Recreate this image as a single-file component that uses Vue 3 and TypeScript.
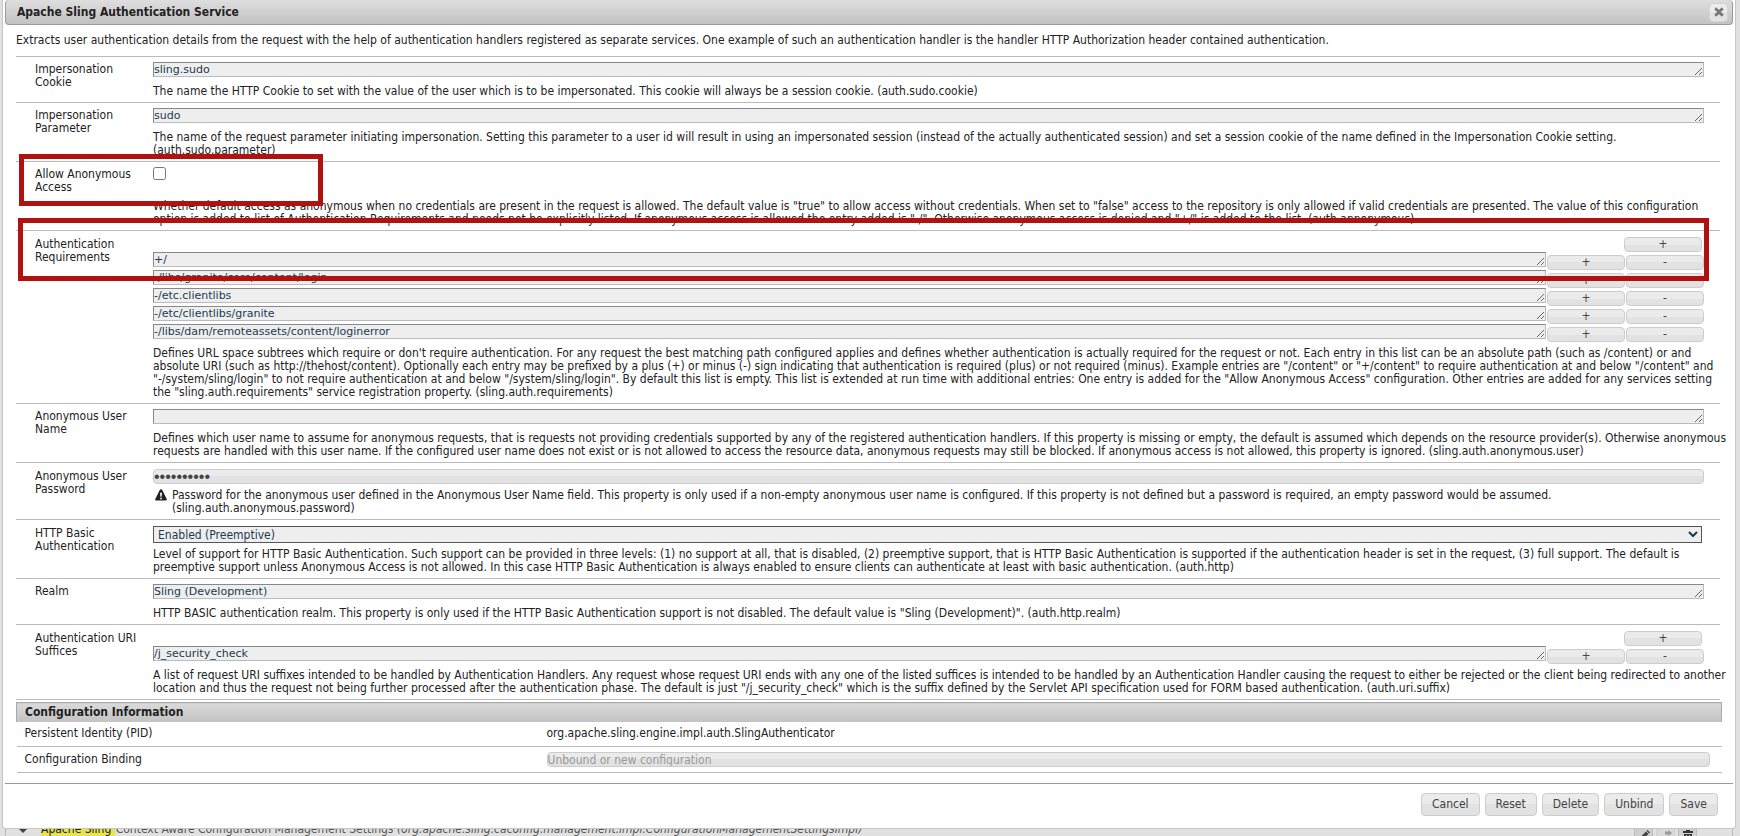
<script setup lang="ts">
import { reactive } from 'vue'

type Kind = 'text' | 'check' | 'list' | 'password' | 'select'

interface Field {
  id: string
  label: string
  kind: Kind
  values: string[]
  description: string
  marked?: boolean
}

const fields = reactive<Field[]>([
  {
    id: 'auth.sudo.cookie',
    label: 'Impersonation Cookie',
    kind: 'text',
    values: ['sling.sudo'],
    description:
      'The name the HTTP Cookie to set with the value of the user which is to be impersonated. This cookie will always be a session cookie. (auth.sudo.cookie)',
  },
  {
    id: 'auth.sudo.parameter',
    label: 'Impersonation Parameter',
    kind: 'text',
    values: ['sudo'],
    description:
      'The name of the request parameter initiating impersonation. Setting this parameter to a user id will result in using an impersonated session (instead of the actually authenticated session) and set a session cookie of the name defined in the Impersonation Cookie setting. (auth.sudo.parameter)',
  },
  {
    id: 'auth.annonymous',
    label: 'Allow Anonymous Access',
    kind: 'check',
    values: [],
    marked: true,
    description:
      'Whether default access as anonymous when no credentials are present in the request is allowed. The default value is "true" to allow access without credentials. When set to "false" access to the repository is only allowed if valid credentials are presented. The value of this configuration option is added to list of Authentication Requirements and needs not be explicitly listed. If anonymous access is allowed the entry added is "-/". Otherwise anonymous access is denied and "+/" is added to the list. (auth.annonymous)',
  },
  {
    id: 'sling.auth.requirements',
    label: 'Authentication Requirements',
    kind: 'list',
    values: [
      '+/',
      '-/libs/granite/core/content/login',
      '-/etc.clientlibs',
      '-/etc/clientlibs/granite',
      '-/libs/dam/remoteassets/content/loginerror',
    ],
    marked: true,
    description:
      'Defines URL space subtrees which require or don\'t require authentication. For any request the best matching path configured applies and defines whether authentication is actually required for the request or not. Each entry in this list can be an absolute path (such as /content) or and absolute URI (such as http://thehost/content). Optionally each entry may be prefixed by a plus (+) or minus (-) sign indicating that authentication is required (plus) or not required (minus). Example entries are "/content" or "+/content" to require authentication at and below "/content" and "-/system/sling/login" to not require authentication at and below "/system/sling/login". By default this list is empty. This list is extended at run time with additional entries: One entry is added for the "Allow Anonymous Access" configuration. Other entries are added for any services setting the "sling.auth.requirements" service registration property. (sling.auth.requirements)',
  },
  {
    id: 'sling.auth.anonymous.user',
    label: 'Anonymous User Name',
    kind: 'text',
    values: [''],
    description:
      'Defines which user name to assume for anonymous requests, that is requests not providing credentials supported by any of the registered authentication handlers. If this property is missing or empty, the default is assumed which depends on the resource provider(s). Otherwise anonymous requests are handled with this user name. If the configured user name does not exist or is not allowed to access the resource data, anonymous requests may still be blocked. If anonymous access is not allowed, this property is ignored. (sling.auth.anonymous.user)',
  },
  {
    id: 'sling.auth.anonymous.password',
    label: 'Anonymous User Password',
    kind: 'password',
    values: ['unmodified'],
    description:
      'Password for the anonymous user defined in the Anonymous User Name field. This property is only used if a non-empty anonymous user name is configured. If this property is not defined but a password is required, an empty password would be assumed. (sling.auth.anonymous.password)',
  },
  {
    id: 'auth.http',
    label: 'HTTP Basic Authentication',
    kind: 'select',
    values: ['Enabled (Preemptive)'],
    description:
      'Level of support for HTTP Basic Authentication. Such support can be provided in three levels: (1) no support at all, that is disabled, (2) preemptive support, that is HTTP Basic Authentication is supported if the authentication header is set in the request, (3) full support. The default is preemptive support unless Anonymous Access is not allowed. In this case HTTP Basic Authentication is always enabled to ensure clients can authenticate at least with basic authentication. (auth.http)',
  },
  {
    id: 'auth.http.realm',
    label: 'Realm',
    kind: 'text',
    values: ['Sling (Development)'],
    description:
      'HTTP BASIC authentication realm. This property is only used if the HTTP Basic Authentication support is not disabled. The default value is "Sling (Development)". (auth.http.realm)',
  },
  {
    id: 'auth.uri.suffix',
    label: 'Authentication URI Suffices',
    kind: 'list',
    values: ['/j_security_check'],
    description:
      'A list of request URI suffixes intended to be handled by Authentication Handlers. Any request whose request URI ends with any one of the listed suffices is intended to be handled by an Authentication Handler causing the request to either be rejected or the client being redirected to another location and thus the request not being further processed after the authentication phase. The default is just "/j_security_check" which is the suffix defined by the Servlet API specification used for FORM based authentication. (auth.uri.suffix)',
  },
])

const modes = ['Disabled', 'Enabled', 'Enabled (Preemptive)']
const actions = ['Cancel', 'Reset', 'Delete', 'Unbind', 'Save']

function insert(field: Field, index: number): void {
  field.values.splice(index, 0, '')
}

function remove(field: Field, index: number): void {
  field.values.splice(index, 1)
}
</script>

<template>
  <div class="page">
    <section class="dialog" role="dialog" aria-labelledby="dialog-title">
      <header class="titlebar">
        <h1 id="dialog-title">Apache Sling Authentication Service</h1>
        <button type="button" class="close" aria-label="Close">
          <svg viewBox="0 0 10 10" width="10" height="10">
            <path d="M1.2 1.4 5 4.7 8.8 1.4M1.2 8.6 5 5.3 8.8 8.6M3 5H7" fill="none" stroke="#777" stroke-width="2.8" />
          </svg>
        </button>
      </header>

      <form class="content" @submit.prevent>
        <p class="intro">
          Extracts user authentication details from the request with the help of authentication handlers registered as
          separate services. One example of such an authentication handler is the handler HTTP Authorization header
          contained authentication.
        </p>

        <div v-for="field in fields" :key="field.id" class="row" :class="field.kind">
          <label class="name" :for="field.id">{{ field.label }}</label>
          <div class="value">
            <textarea
              v-if="field.kind === 'text'"
              :id="field.id"
              v-model="field.values[0]"
              class="area"
              rows="1"
            ></textarea>
            <input v-else-if="field.kind === 'check'" :id="field.id" type="checkbox" class="tick" />
            <input
              v-else-if="field.kind === 'password'"
              :id="field.id"
              v-model="field.values[0]"
              type="password"
              class="box"
              autocomplete="off"
            />
            <select v-else-if="field.kind === 'select'" :id="field.id" v-model="field.values[0]" class="choice">
              <option v-for="mode in modes" :key="mode">{{ mode }}</option>
            </select>
            <div v-else class="entries">
              <button type="button" class="small first" aria-label="Add entry" @click="insert(field, 0)">+</button>
              <div v-for="(_, i) in field.values" :key="i" class="entry">
                <textarea
                  :id="i === 0 ? field.id : undefined"
                  v-model="field.values[i]"
                  class="area"
                  rows="1"
                  :aria-label="field.label + ' ' + (i + 1)"
                ></textarea>
                <button type="button" class="small" aria-label="Add after" @click="insert(field, i + 1)">+</button>
                <button type="button" class="small" aria-label="Remove" @click="remove(field, i)">-</button>
              </div>
            </div>

            <div class="note">
              <svg v-if="field.kind === 'password'" class="alert" viewBox="0 0 12 12" width="12" height="12">
                <path d="M6 0.2Q6.9 0.2 7.4 1.3L11.7 10Q12.2 11.6 11 11.6H1Q-0.2 11.6 0.3 10L4.6 1.3Q5.1 0.2 6 0.2Z" fill="#222" />
                <path d="M5 3.8H7L6.6 7.8H5.4ZM5.2 8.7H6.8V10.2H5.2Z" fill="#fff" />
              </svg>
              <p>{{ field.description }}</p>
            </div>
          </div>
          <div v-if="field.marked" class="marker"></div>
        </div>

        <table class="info">
          <thead>
            <tr>
              <th colspan="2">Configuration Information</th>
            </tr>
          </thead>
          <tbody>
            <tr>
              <td>Persistent Identity (PID)</td>
              <td>org.apache.sling.engine.impl.auth.SlingAuthenticator</td>
            </tr>
            <tr class="binding">
              <td><label for="binding">Configuration Binding</label></td>
              <td><input id="binding" class="box" type="text" value="Unbound or new configuration" disabled /></td>
            </tr>
          </tbody>
        </table>
      </form>

      <footer class="actions">
        <button v-for="action in actions" :key="action" type="button">{{ action }}</button>
      </footer>
    </section>

    <div class="behind">
      <svg class="arrow" viewBox="0 0 8 8" width="8" height="8"><path d="M0 1H8V3L4 7 0 3Z" fill="#444" /></svg>
      <span class="title"><mark>Apache Sling </mark>Context Aware Configuration Management Settings <em>(org.apache.sling.caconfig.management.impl.ConfigurationManagementSettingsImpl)</em></span>
      <span class="tools">
        <button type="button" aria-label="Edit">
          <svg viewBox="0 0 12 12" width="12" height="12"><path d="M1 11 2 7.5 8 1.5 10.5 4 4.5 10ZM8.6 1 9.6 0 12 2.4 11 3.4Z" fill="#444" /></svg>
        </button>
        <button type="button" aria-label="Unbind" disabled>
          <svg viewBox="0 0 12 12" width="12" height="12"><path d="M5 1.5H8.5V0L12 3 8.5 6V4.5H5ZM7 7.5H3.5V6L0 9 3.5 12V10.5H7Z" fill="#333" /></svg>
        </button>
        <button type="button" aria-label="Delete">
          <svg viewBox="0 0 12 12" width="12" height="12"><path d="M1 1H4V0H8V1H11V3H1ZM2 4H10V12H2Z" fill="#333" /><path d="M4.5 5V11M7.5 5V11" stroke="#ccc" stroke-width="1" /></svg>
        </button>
      </span>
    </div>
  </div>
</template>

<style>
body {
  margin: 0;
  background: #e1e1e1;
}
</style>

<style scoped>
.page {
  height: 100vh;
  overflow: hidden;
  color: #222;
  font: 12px/13px 'DejaVu Sans Condensed', 'DejaVu Sans', Verdana, sans-serif;
}

.page * {
  box-sizing: border-box;
}

button,
input,
select,
textarea {
  margin: 0;
  padding: 0;
  font: inherit;
}

h1,
p {
  margin: 0;
  font-size: 12px;
}

.dialog {
  position: relative;
  z-index: 1;
  margin: 0 4px 0 2px;
  padding: 0 2px;
  border: 1px solid #c6c6c6;
  border-top: 0;
  border-radius: 0 0 4px 4px;
  background: #fff;
}

.titlebar {
  display: flex;
  align-items: center;
  justify-content: space-between;
  height: 25px;
  padding: 0 4px 0 11px;
  border: 1px solid #999;
  border-top: 0;
  border-radius: 4px;
  background: linear-gradient(#dedede, #c2c2c2);
}

.close {
  display: flex;
  align-items: center;
  justify-content: center;
  width: 19px;
  height: 19px;
  border: 1px solid #d3d3d3;
  border-radius: 4px;
  background: linear-gradient(#ececec 50%, #e2e2e2 50%);
}

.content {
  padding: 8px 11px 10px;
}

.intro {
  padding: 0 0 9px;
  line-height: 14px;
}

.row {
  position: relative;
  display: grid;
  grid-template-columns: 118px 1fr;
  margin-right: 2px;
  padding: 5px 0 4px 19px;
  border-top: 1px solid #bbb;
}

.row:last-of-type {
  border-bottom: 1px solid #bbb;
}

.name {
  padding: 1px 12px 0 0;
}

.value {
  display: flex;
  flex-direction: column;
}

.area {
  display: block;
  width: 100%;
  height: 15px;
  border: 1px solid;
  border-color: #888 #bbb #bbb #888;
  overflow: hidden;
  background: #eee;
  color: #1a3c50;
  font: 11px/14px 'DejaVu Sans', Verdana, sans-serif;
}

.value > .area,
.value > .box {
  width: auto;
  margin-right: 16px;
}

.note {
  display: flex;
  margin-right: -8px;
  padding-top: 8px;
}

.tick {
  width: 13px;
  height: 13px;
}

.check .note {
  margin-right: 0;
  padding-top: 20px;
}

.list,
.password,
.select {
  padding-top: 6px;
}

.list .note,
.password .note,
.select .note {
  padding-top: 5px;
}

.first {
  align-self: flex-end;
  margin-right: 2px;
}

.entries {
  display: flex;
  flex-direction: column;
  margin-right: 16px;
}

.entry {
  display: flex;
  gap: 1px;
  height: 18px;
}

.entry .area {
  flex: 1;
}

.small {
  flex: none;
  width: 78px;
  height: 15px;
  border: 1px solid #ccc;
  border-radius: 4px;
  background: linear-gradient(#ebebeb 50%, #e2e2e2 50%);
  color: #444;
  line-height: 13px;
}

.entry .small {
  margin-top: 3px;
}

.box {
  height: 15px;
  border: 1px solid #ccc;
  border-radius: 4px;
  background: linear-gradient(#ebebeb 50%, #e2e2e2 50%);
  color: #444;
}

.password .box {
  font: 16px/13px 'Liberation Sans', Arial, sans-serif;
}

.alert {
  flex: none;
  margin: 0 5px 0 2px;
}

.choice {
  height: 17px;
  margin-right: 18px;
  border: 1px solid #555;
  border-radius: 0;
  background: #eee;
  color: #1a3c50;
}

.marker {
  position: absolute;
  top: -8px;
  left: 3px;
  width: 304px;
  height: 52px;
  border: 5px solid #b0120f;
  pointer-events: none;
}

.list .marker {
  top: -13px;
  left: 2px;
  right: 11px;
  width: auto;
  height: 63px;
}

.info {
  width: 100%;
  margin-top: 2px;
  border-collapse: collapse;
}

.info th {
  height: 19px;
  padding: 0 8px;
  border: 1px solid #aaa;
  border-bottom: 0;
  background: linear-gradient(#dadada, #c2c2c2);
  text-align: left;
}

.info td {
  height: 25px;
  padding: 0 8px;
  border-bottom: 1px solid #bbb;
}

.info .binding td {
  height: 26px;
}

.info td:first-child {
  width: 522px;
}

.info td:last-child {
  padding-right: 12px;
}

.info .box {
  display: block;
  width: 100%;
  color: #999;
}

.actions {
  display: flex;
  justify-content: flex-end;
  gap: 5px;
  padding: 9px 15px 12px;
  border-top: 1px solid #999;
}

.actions button {
  height: 23px;
  padding: 0 10px;
  border: 1px solid #ccc;
  border-radius: 4px;
  background: linear-gradient(#ebebeb 50%, #e2e2e2 50%);
  color: #444;
}

.behind {
  display: flex;
  align-items: center;
  margin: -8px 7px 0 5px;
  height: 18px;
  padding: 0 35px 0 13px;
  border: 1px solid #bbb;
  border-top: 0;
  color: #555;
}

.title {
  flex: 1;
  margin-left: 14px;
}

.title mark {
  margin-right: 1px;
  background: #e6e64c;
  color: #222;
  white-space: pre;
}

.tools {
  display: flex;
  align-self: flex-start;
  gap: 3px;
  margin-top: 6px;
}

.tools button {
  width: 19px;
  height: 20px;
  border: 1px solid #bbb;
  border-radius: 3px;
  background: #cfcfcf;
}

.tools button:disabled {
  opacity: 0.4;
}
</style>
